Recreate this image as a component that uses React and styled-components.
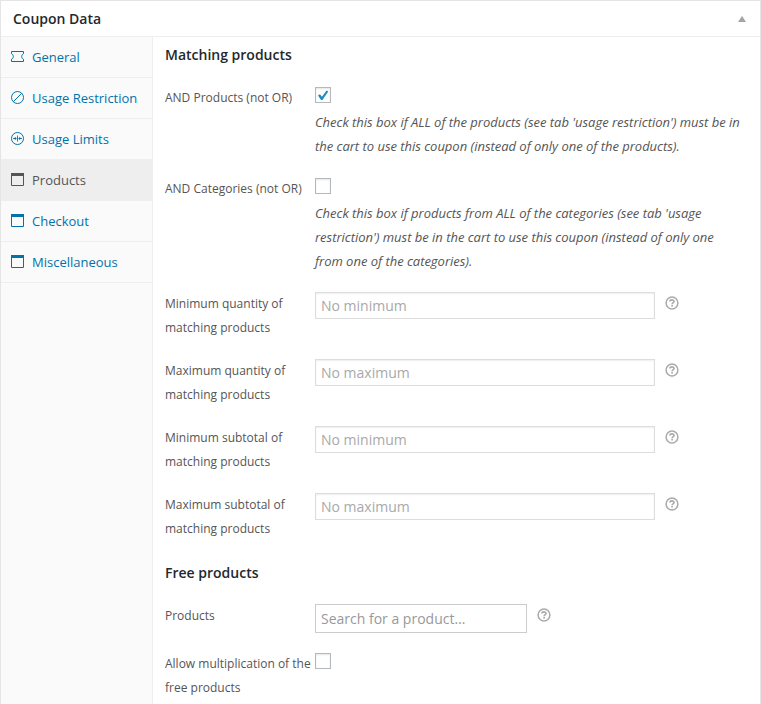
import React from 'react';
import styled, { createGlobalStyle } from 'styled-components';

const GlobalStyle = createGlobalStyle`
  *, *::before, *::after { box-sizing: border-box; }
  body {
    margin: 0;
    background: #fff;
    color: #555;
    font-family: "Open Sans", sans-serif;
    font-size: 13px;
    overflow: hidden;
  }
`;

const Panel = styled.section`
  display: flex;
  flex-direction: column;
  height: 704px;
  border: 1px solid #e5e5e5;
  border-bottom: 0;
`;

const Header = styled.header`
  display: flex;
  align-items: center;
  justify-content: space-between;
  height: 36px;
  flex: none;
  padding: 0 14px 0 12px;
  border-bottom: 1px solid #eee;
`;

const Title = styled.h2`
  margin: 0;
  font-size: 14px;
  font-weight: 600;
  line-height: 20px;
  color: #23282d;
`;

const Toggle = styled.span`
  width: 0;
  border: solid transparent;
  border-width: 0 4px 6px;
  border-bottom-color: #a0a5aa;
`;

const Columns = styled.div`
  display: flex;
  flex: 1;
  min-height: 0;
`;

const Tabs = styled.nav`
  width: 152px;
  flex: none;
  background: #fafafa;
  border-right: 1px solid #eee;
`;

const Tab = styled.a`
  display: flex;
  align-items: center;
  gap: 8px;
  height: 41px;
  padding-left: 10px;
  border-bottom: 1px solid #eee;
  background: ${(p) => (p.$active ? '#eee' : 'transparent')};
  color: ${(p) => (p.$active ? '#555' : '#0073aa')};
  font-size: 13px;
  line-height: 20px;
  white-space: nowrap;

  svg { flex: none; margin-bottom: 1px; }
`;

const Content = styled.main`
  flex: 1;
  min-width: 0;
  overflow: hidden;
`;

const SectionTitle = styled.h3`
  margin: 0;
  padding: 6px 12px 0;
  height: 44px;
  font-size: 14px;
  font-weight: 600;
  line-height: 24px;
  color: #23282d;
`;

const Field = styled.div`
  display: grid;
  grid-template-columns: 150px 1fr;
  padding: 5px 16px 5px 12px;
  margin-bottom: 9px;
  line-height: 24px;
`;

const Label = styled.label`
  font-size: 12px;
  white-space: pre-line;
`;

const Control = styled.div`
  display: flex;
  flex-wrap: wrap;
  align-items: flex-start;
  align-content: flex-start;
`;

const Checkbox = styled.span`
  display: flex;
  align-items: center;
  justify-content: center;
  width: 16px;
  height: 16px;
  margin: 1px 0 7px;
  border: 1px solid #b4b9be;
  background: #fff;
  box-shadow: inset 0 1px 2px rgba(0, 0, 0, 0.1);
`;

const Description = styled.p`
  flex: 0 0 100%;
  margin: 0;
  font-size: 13px;
  font-style: italic;
  letter-spacing: -0.02px;
  color: #555;
  white-space: pre;
`;

const Input = styled.input`
  width: ${(p) => (p.$search ? '212px' : '340px')};
  height: ${(p) => (p.$search ? '29px' : '27px')};
  margin: 0;
  padding: 0 5px;
  border: 1px solid ${(p) => (p.$search ? '#ccc' : '#ddd')};
  border-radius: 0;
  box-shadow: ${(p) => (p.$search ? 'none' : 'inset 0 1px 2px rgba(0, 0, 0, 0.07)')};
  font: 14px "Open Sans", sans-serif;
  color: #32373c;

  &::placeholder { color: ${(p) => (p.$search ? '#999' : '#a9a9a9')}; opacity: 1; }
`;

const HelpTip = styled.svg`
  margin: 4px 0 0 10px;
`;

const TicketIcon = () => (
  <svg width="13" height="13" viewBox="0 0 13 13" fill="none" stroke="currentColor">
    <path d="M.5 1.5h12v2.2c-2.4.9-2.4 4.7 0 5.6v2.2H.5V9.3c2.4-.9 2.4-4.7 0-5.6z" />
  </svg>
);

const BlockedIcon = () => (
  <svg width="13" height="13" viewBox="0 0 13 13" fill="none" stroke="currentColor">
    <circle cx="6.5" cy="6.5" r="6" />
    <path d="M2.3 10.7l8.4-8.4" />
  </svg>
);

const LimitsIcon = () => (
  <svg width="13" height="13" viewBox="0 0 13 13" fill="none" stroke="currentColor">
    <circle cx="6.5" cy="6.5" r="6" />
    <path d="M6.5 3.5v6M2 6.5h3M8 6.5h3" strokeWidth=".9" />
    <path d="M3.8 4.7l2 1.8-2 1.8zM9.2 4.7l-2 1.8 2 1.8z" fill="currentColor" stroke="none" />
  </svg>
);

const WindowIcon = () => (
  <svg width="13" height="13" viewBox="0 0 13 13">
    <path d="M.5.5h12v12H.5z" fill="none" stroke="currentColor" />
    <path d="M0 0h13v3H0z" fill="currentColor" />
  </svg>
);

const Check = () => (
  <svg width="14" height="14" viewBox="0 0 14 14">
    <path d="M2 7.4l1.9-1.1 2.1 2.5 4.6-6.3 1.7 1L6.4 12H5z" fill="#1e8cbe" />
  </svg>
);

const Help = () => (
  <HelpTip width="14" height="14" viewBox="0 0 14 14" fill="none" stroke="#aaa">
    <circle cx="7" cy="7" r="5.9" strokeWidth="1.5" />
    <path d="M5 5.5c.1-2.1 4-2.1 4 0 0 1.4-1.9 1.3-1.9 2.7" strokeWidth="1.7" />
    <path d="M7.1 9v1.6" strokeWidth="1.7" />
  </HelpTip>
);

const tabs = [
  ['General', TicketIcon],
  ['Usage Restriction', BlockedIcon],
  ['Usage Limits', LimitsIcon],
  ['Products', WindowIcon],
  ['Checkout', WindowIcon],
  ['Miscellaneous', WindowIcon],
];

const limits = [
  ['Minimum quantity of\nmatching products', 'No minimum'],
  ['Maximum quantity of\nmatching products', 'No maximum'],
  ['Minimum subtotal of\nmatching products', 'No minimum'],
  ['Maximum subtotal of\nmatching products', 'No maximum'],
];

const CheckField = ({ label, checked, children }) => (
  <Field>
    <Label>{label}</Label>
    <Control>
      <Checkbox role="checkbox" aria-checked={!!checked}>{checked && <Check />}</Checkbox>
      {children && <Description>{children}</Description>}
    </Control>
  </Field>
);

const InputField = ({ label, placeholder, search }) => (
  <Field>
    <Label>{label}</Label>
    <Control>
      <Input placeholder={placeholder} $search={search} />
      <Help />
    </Control>
  </Field>
);

export default function App() {
  return (
    <>
      <GlobalStyle />
      <Panel>
        <Header>
          <Title>Coupon Data</Title>
          <Toggle />
        </Header>
        <Columns>
          <Tabs>
            {tabs.map(([name, Icon]) => (
              <Tab key={name} $active={name === 'Products'}>
                <Icon />
                {name}
              </Tab>
            ))}
          </Tabs>
          <Content>
            <SectionTitle>Matching products</SectionTitle>
            <CheckField label="AND Products (not OR)" checked>
              {"Check this box if ALL of the products (see tab 'usage restriction') must be in\nthe cart to use this coupon (instead of only one of the products)."}
            </CheckField>
            <CheckField label="AND Categories (not OR)">
              {"Check this box if products from ALL of the categories (see tab 'usage\nrestriction') must be in the cart to use this coupon (instead of only one\nfrom one of the categories)."}
            </CheckField>
            {limits.map(([label, placeholder]) => (
              <InputField key={label} label={label} placeholder={placeholder} />
            ))}
            <SectionTitle>Free products</SectionTitle>
            <InputField label="Products" placeholder="Search for a product…" search />
            <CheckField label={'Allow multiplication of the\nfree products'} />
          </Content>
        </Columns>
      </Panel>
    </>
  );
}
